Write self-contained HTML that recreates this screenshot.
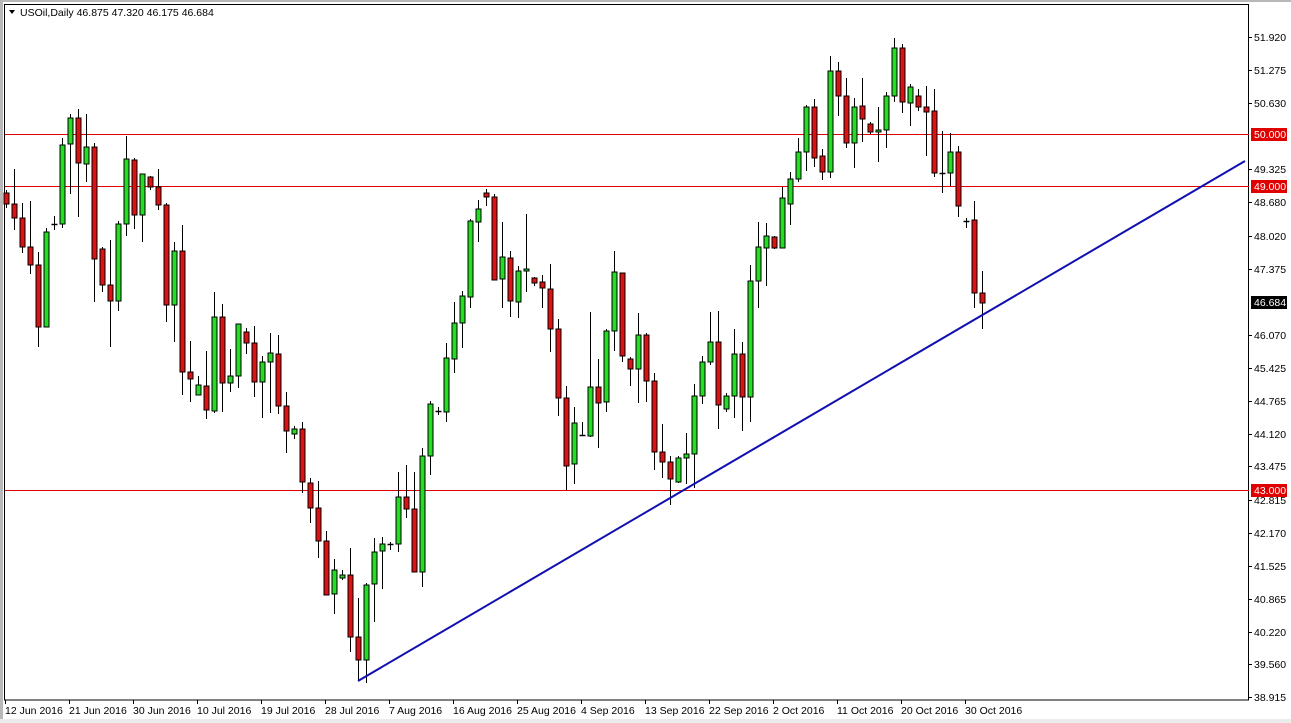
<!DOCTYPE html>
<html><head><meta charset="utf-8"><style>
html,body{margin:0;padding:0;background:#fff;}
body{width:1291px;height:723px;overflow:hidden;position:relative;font-family:"Liberation Sans",sans-serif;}
svg{position:absolute;left:0;top:0;}
</style></head><body>
<svg id="s" width="1291" height="723" viewBox="0 0 1291 723" xmlns="http://www.w3.org/2000/svg" font-family="Liberation Sans, sans-serif" font-size="10.5">
<rect x="0" y="0" width="1291" height="723" fill="#fff"/>
<rect x="0" y="0" width="3" height="723" fill="#b8b8b8"/>
<rect x="0" y="719" width="1291" height="4" fill="#ececec"/>
<rect x="0" y="0" width="1291" height="2" fill="#b8b8b8"/>
<rect x="4.5" y="4.5" width="1244" height="695.5" fill="#fff" stroke="#000" stroke-width="1"/>
<g stroke="#e00000" stroke-width="1">
<line x1="5" y1="134.5" x2="1249" y2="134.5"/>
<line x1="5" y1="186.5" x2="1249" y2="186.5"/>
<line x1="5" y1="490.5" x2="1249" y2="490.5"/>
</g>
<g id="c"></g>
<line x1="358" y1="681" x2="1245" y2="161" stroke="#1010b0" stroke-width="2"/>
<polygon points="9,10 15,10 12,14" fill="#000"/>
<text x="20" y="16" fill="#000">USOil,Daily  46.875 47.320 46.175 46.684</text>
<g id="ax" fill="#000"></g>
</svg>
<script>
var D=[
['r',193,204,190,208],['r',204,218,169,230],['r',218,247,203,253],['r',247,265,201,274],['r',265,327,252,347],
['g',232,327,228,327],['d',224,224,216,230],['g',145,224,138,228],['g',118,144,114,194],['r',118,163,109,217],
['g',147,164,114,182],['r',147,259,143,302],['r',249,285,247,292],['r',285,301,240,347],['g',224,301,221,311],
['g',159,224,136,236],['r',160,215,158,229],['g',174,215,174,242],['r',177,187,176,190],['r',187,205,169,210],
['r',205,305,203,322],['g',251,305,242,342],['r',251,372,225,395],['r',372,379,341,402],['g',385,395,376,395],
['r',386,410,351,419],['g',317,411,292,413],['r',317,383,304,412],['g',376,383,349,392],['g',324,376,324,388],
['r',332,343,328,354],['r',343,382,326,397],['g',362,382,356,418],['g',353,362,333,413],['r',354,406,335,414],
['r',406,431,392,453],['g',429,434,426,439],['r',429,482,422,493],['r',483,508,478,523],['r',508,541,481,558],
['r',541,595,531,595],['g',570,594,559,614],['g',575,578,570,580],['r',575,637,548,652],['r',637,660,598,680],
['g',585,660,583,683],['g',552,584,538,622],['g',544,551,537,589],['d',544,544,542,550],['g',497,544,472,552],
['r',497,509,465,518],['r',509,572,472,572],['g',456,572,448,587],['g',404,456,401,475],['d',411,411,407,415],
['g',358,412,343,422],['g',323,359,302,373],['g',296,323,291,348],['g',221,297,219,308],['g',209,222,200,242],
['r',193,197,189,206],['r',197,280,194,280],['g',257,279,222,308],['r',258,301,251,317],['g',271,302,266,318],
['g',269,271,214,292],['r',278,283,277,286],['r',282,288,275,308],['r',289,329,264,352],['r',329,398,319,416],
['r',398,466,386,490],['g',423,464,407,484],['d',435,435,422,436],['g',387,436,312,437],['r',387,403,359,448],
['g',331,402,329,412],['g',272,331,251,351],['r',273,356,273,362],['r',359,369,357,386],['g',335,369,313,403],
['r',335,381,333,402],['r',381,452,373,470],['r',452,462,424,478],['r',462,479,456,505],['g',458,482,456,483],
['g',454,458,433,484],['g',396,454,384,488],['g',362,396,356,404],['g',342,362,312,365],['r',342,405,311,429],
['g',396,409,393,412],['g',354,396,329,418],['r',354,397,342,431],['g',281,397,265,422],['g',247,281,222,308],
['g',236,248,223,286],['r',237,248,236,249],['g',198,248,187,248],['g',179,204,172,225],['g',152,179,138,182],
['g',107,152,105,171],['r',107,158,99,167],['r',156,172,149,180],['g',71,172,56,178],['r',71,96,62,116],
['r',96,143,78,148],['g',107,143,98,168],['r',106,119,78,142],['r',124,132,122,134],['g',130,132,107,162],
['g',96,130,92,148],['g',48,96,38,102],['r',48,102,44,113],['g',87,103,84,126],['r',96,107,89,111],
['r',107,112,86,156],['r',111,173,89,177],['d',173,173,131,193],['g',152,173,133,186],['r',152,206,146,217],
['d',221,221,218,228],['r',220,293,201,308],['r',293,303,271,329]
];
var NS='http://www.w3.org/2000/svg',g=document.getElementById('c'),h='';
D.forEach(function(d,i){var x=Math.round(5.7+8*i)+0.5;
h+='<line x1="'+x+'" y1="'+d[3]+'" x2="'+x+'" y2="'+d[4]+'" stroke="#000" stroke-width="1"/>';
if(d[0]=='d'){h+='<line x1="'+(x-3)+'" y1="'+(d[1]+0.5)+'" x2="'+(x+3)+'" y2="'+(d[1]+0.5)+'" stroke="#000" stroke-width="1.5"/>';}
else{var ht=Math.max(d[2]-d[1],2);h+='<rect x="'+(x-2.5)+'" y="'+d[1]+'" width="5" height="'+ht+'" fill="'+(d[0]=='g'?'#22dd22':'#dd1111')+'" stroke="#000" stroke-width="1"/>';}
});
g.innerHTML=h;
</script>
<svg width="1291" height="723" viewBox="0 0 1291 723" xmlns="http://www.w3.org/2000/svg" font-family="Liberation Sans, sans-serif" font-size="10.5" style="pointer-events:none">
<g fill="#000">
<text x="1254" y="41">51.920</text><text x="1254" y="74">51.275</text><text x="1254" y="107">50.630</text>
<text x="1254" y="173">49.325</text><text x="1254" y="206">48.680</text><text x="1254" y="240">48.020</text>
<text x="1254" y="273">47.375</text><text x="1254" y="339">46.070</text><text x="1254" y="372">45.425</text>
<text x="1254" y="405">44.765</text><text x="1254" y="438">44.120</text><text x="1254" y="470">43.475</text>
<text x="1254" y="504">42.815</text><text x="1254" y="537">42.170</text><text x="1254" y="570">41.525</text>
<text x="1254" y="603">40.865</text><text x="1254" y="636">40.220</text><text x="1254" y="668">39.560</text>
<text x="1254" y="701">38.915</text>
</g>
<g stroke="#000" stroke-width="1">
<line x1="1249" y1="37.5" x2="1252" y2="37.5"/><line x1="1249" y1="70.5" x2="1252" y2="70.5"/><line x1="1249" y1="103.5" x2="1252" y2="103.5"/>
<line x1="1249" y1="169.5" x2="1252" y2="169.5"/><line x1="1249" y1="202.5" x2="1252" y2="202.5"/><line x1="1249" y1="236.5" x2="1252" y2="236.5"/>
<line x1="1249" y1="269.5" x2="1252" y2="269.5"/><line x1="1249" y1="335.5" x2="1252" y2="335.5"/><line x1="1249" y1="368.5" x2="1252" y2="368.5"/>
<line x1="1249" y1="401.5" x2="1252" y2="401.5"/><line x1="1249" y1="434.5" x2="1252" y2="434.5"/><line x1="1249" y1="466.5" x2="1252" y2="466.5"/>
<line x1="1249" y1="500.5" x2="1252" y2="500.5"/><line x1="1249" y1="533.5" x2="1252" y2="533.5"/><line x1="1249" y1="566.5" x2="1252" y2="566.5"/>
<line x1="1249" y1="599.5" x2="1252" y2="599.5"/><line x1="1249" y1="632.5" x2="1252" y2="632.5"/><line x1="1249" y1="664.5" x2="1252" y2="664.5"/>
<line x1="1249" y1="697.5" x2="1252" y2="697.5"/>
</g>
<rect x="1251" y="128" width="36" height="13" fill="#e00000"/><text x="1254" y="138" fill="#fff">50.000</text>
<rect x="1251" y="180" width="36" height="13" fill="#e00000"/><text x="1254" y="190" fill="#fff">49.000</text>
<rect x="1251" y="296" width="36" height="13" fill="#000"/><text x="1254" y="306" fill="#fff">46.684</text>
<rect x="1251" y="484" width="36" height="13" fill="#e00000"/><text x="1254" y="494" fill="#fff">43.000</text>
<g stroke="#000" stroke-width="1">
<line x1="5.5" y1="700" x2="5.5" y2="704"/><line x1="69.5" y1="700" x2="69.5" y2="704"/><line x1="133.5" y1="700" x2="133.5" y2="704"/>
<line x1="197.5" y1="700" x2="197.5" y2="704"/><line x1="261.5" y1="700" x2="261.5" y2="704"/><line x1="325.5" y1="700" x2="325.5" y2="704"/>
<line x1="389.5" y1="700" x2="389.5" y2="704"/><line x1="453.5" y1="700" x2="453.5" y2="704"/><line x1="517.5" y1="700" x2="517.5" y2="704"/>
<line x1="581.5" y1="700" x2="581.5" y2="704"/><line x1="645.5" y1="700" x2="645.5" y2="704"/><line x1="709.5" y1="700" x2="709.5" y2="704"/>
<line x1="773.5" y1="700" x2="773.5" y2="704"/><line x1="837.5" y1="700" x2="837.5" y2="704"/><line x1="901.5" y1="700" x2="901.5" y2="704"/>
<line x1="965.5" y1="700" x2="965.5" y2="704"/>
</g>
<g fill="#000">
<text x="5" y="714">12 Jun 2016</text><text x="69" y="714">21 Jun 2016</text><text x="133" y="714">30 Jun 2016</text>
<text x="197" y="714">10 Jul 2016</text><text x="261" y="714">19 Jul 2016</text><text x="325" y="714">28 Jul 2016</text>
<text x="389" y="714">7 Aug 2016</text><text x="453" y="714">16 Aug 2016</text><text x="517" y="714">25 Aug 2016</text>
<text x="581" y="714">4 Sep 2016</text><text x="645" y="714">13 Sep 2016</text><text x="709" y="714">22 Sep 2016</text>
<text x="773" y="714">2 Oct 2016</text><text x="837" y="714">11 Oct 2016</text><text x="901" y="714">20 Oct 2016</text>
<text x="965" y="714">30 Oct 2016</text>
</g>
</svg>
</body></html>
